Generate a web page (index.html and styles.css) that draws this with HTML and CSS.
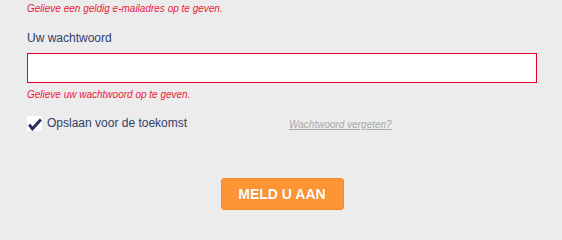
FILE: index.html
```html
<!DOCTYPE html>
<html lang="nl">
<head>
<meta charset="utf-8">
<title>Aanmelden</title>
<link rel="stylesheet" href="styles.css">
</head>
<body>
<form class="form">
  <p class="error error-first">Gelieve een geldig e-mailadres op te geven.</p>
  <label class="label" for="pw">Uw wachtwoord</label>
  <input class="input" id="pw" type="password">
  <p class="error error-second">Gelieve uw wachtwoord op te geven.</p>
  <div class="row">
    <label class="remember">
      <span class="box"><svg class="check" viewBox="0 0 15 15" width="15" height="15"><polyline points="2.2,8.6 5.4,12.8 13.9,3.6" fill="none" stroke="#2b2f5e" stroke-width="3" stroke-linecap="butt" stroke-linejoin="miter"/></svg></span>
      <span class="remember-text">Opslaan voor de toekomst</span>
    </label>
    <a class="forgot" href="#">Wachtwoord vergeten?</a>
  </div>
  <button class="submit" type="button">MELD U AAN</button>
</form>
</body>
</html>
```
FILE: styles.css
```css
html, body {
  margin: 0;
  padding: 0;
  background: #ececec;
}
body {
  font-family: "Liberation Sans", Arial, sans-serif;
}
.form {
  width: 510px;
  margin: 0 0 0 27px;
  display: flex;
  flex-direction: column;
}
.error {
  margin: 0;
  font-size: 10px;
  line-height: 13px;
  font-style: italic;
  color: #ea1a3d;
}
.error-first {
  padding-top: 2px;
}
.error-second {
  margin-top: 5px;
}
.label {
  margin-top: 16px;
  font-size: 12px;
  line-height: 14px;
  color: #2f3d6a;
}
.input {
  box-sizing: border-box;
  margin: 8px 0 0 0;
  width: 510px;
  height: 30px;
  border: 1px solid #e5002b;
  background: #fff;
  padding: 0 8px;
  outline: none;
}
.row {
  margin-top: 15px;
  display: flex;
  align-items: flex-start;
}
.remember {
  width: 262px;
  display: flex;
  align-items: center;
  height: 15px;
}
.box {
  width: 15px;
  height: 15px;
  background: #fff;
  display: block;
  flex: none;
}
.check {
  display: block;
}
.remember-text {
  margin-left: 5px;
  font-size: 12px;
  line-height: 15px;
  color: #2f3d6a;
}
.forgot {
  padding-top: 1px;
  font-size: 10px;
  line-height: 15px;
  font-style: italic;
  color: #a9a9a9;
  text-decoration: underline;
}
.submit {
  box-sizing: border-box;
  margin: 46px auto 0 auto;
  width: 123px;
  height: 32px;
  border: 1px solid #f5892c;
  border-radius: 3px;
  background: #fd9535;
  color: #fff;
  font-family: "Liberation Sans", Arial, sans-serif;
  font-weight: bold;
  font-size: 14px;
  line-height: 30px;
  padding: 0;
  text-shadow: 0 0 1px rgba(150, 70, 0, 0.35);
}
```
